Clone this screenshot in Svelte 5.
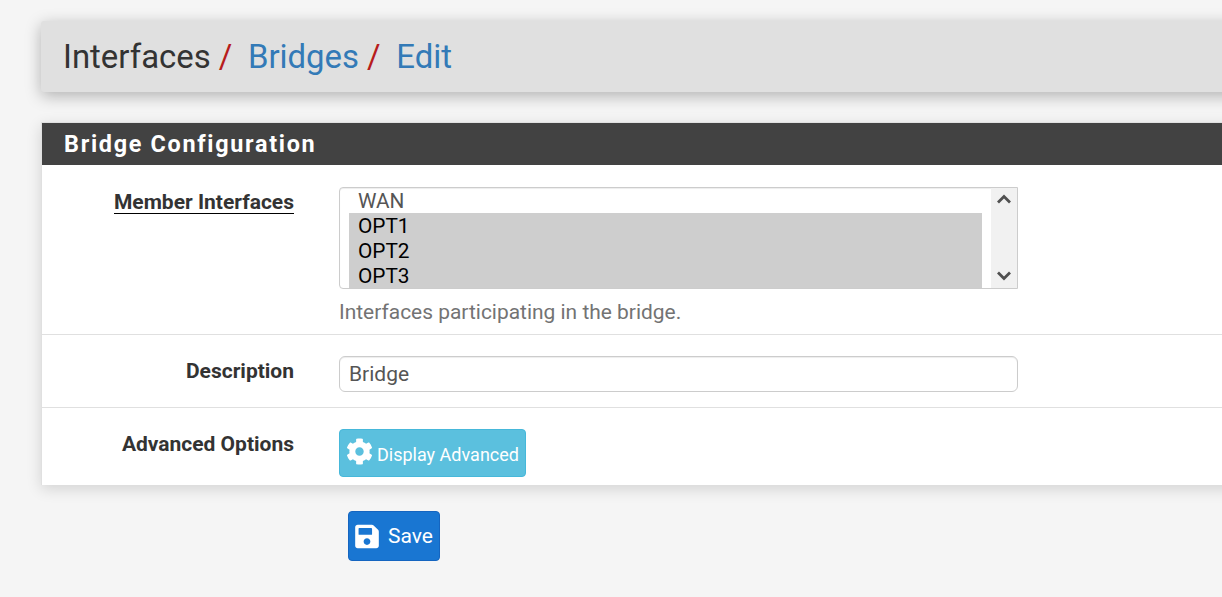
<script>
  const options = [
    { label: 'WAN', selected: false },
    { label: 'OPT1', selected: true },
    { label: 'OPT2', selected: true },
    { label: 'OPT3', selected: true }
  ];
</script>

<div class="page">
  <header class="crumbs">
    <h1>
      <span>Interfaces</span><span class="sep">/</span><a href="#b">Bridges</a><span class="sep">/</span><a href="#e">Edit</a>
    </h1>
  </header>

  <section class="panel">
    <h2>Bridge Configuration</h2>
    <div class="body">
      <div class="row first">
        <div class="label"><span class="under">Member Interfaces</span></div>
        <div class="field">
          <div class="listbox" role="listbox" aria-multiselectable="true">
            <div class="opts">
              {#each options as o}
                <div class="opt" class:sel={o.selected} role="option" aria-selected={o.selected}>{o.label}</div>
              {/each}
            </div>
            <div class="sb">
              <svg width="16" height="12" viewBox="0 0 16 12"><path d="M2 9.5 L8 3.5 L14 9.5" fill="none" stroke="#505050" stroke-width="2.8"/></svg>
              <svg width="16" height="12" viewBox="0 0 16 12"><path d="M2 2.5 L8 8.5 L14 2.5" fill="none" stroke="#505050" stroke-width="2.8"/></svg>
            </div>
          </div>
          <p class="help">Interfaces participating in the bridge.</p>
        </div>
      </div>
      <div class="row second">
        <div class="label">Description</div>
        <div class="field"><input type="text" value="Bridge" /></div>
      </div>
      <div class="row third">
        <div class="label">Advanced Options</div>
        <div class="field">
          <button class="info">
            <svg class="cog" viewBox="0 0 512 512"><path fill="currentColor" d="M487.4 315.7l-42.6-24.6c4.3-23.2 4.3-47 0-70.2l42.6-24.6c4.9-2.8 7.1-8.6 5.5-14-11.1-35.6-30-67.8-54.7-94.6-3.8-4.1-10-5.1-14.8-2.3L380.8 110c-17.9-15.4-38.5-27.3-60.8-35.1V25.8c0-5.6-3.9-10.5-9.4-11.7-36.7-8.2-74.3-7.8-109.2 0-5.5 1.2-9.4 6.1-9.4 11.7V75c-22.2 7.9-42.8 19.8-60.8 35.1L88.7 85.5c-4.9-2.8-11-1.9-14.8 2.3-24.7 26.7-43.6 58.9-54.7 94.6-1.7 5.4.6 11.2 5.5 14L67.3 221c-4.3 23.2-4.3 47 0 70.2l-42.6 24.6c-4.9 2.8-7.1 8.6-5.5 14 11.1 35.6 30 67.8 54.7 94.6 3.8 4.1 10 5.1 14.8 2.3l42.6-24.6c17.9 15.4 38.5 27.3 60.8 35.1v49.2c0 5.6 3.9 10.5 9.4 11.7 36.7 8.2 74.3 7.8 109.2 0 5.5-1.2 9.4-6.1 9.4-11.7v-49.2c22.2-7.9 42.8-19.8 60.8-35.1l42.6 24.6c4.9 2.8 11 1.9 14.8-2.3 24.7-26.7 43.6-58.9 54.7-94.6 1.5-5.5-.7-11.3-5.6-14.1zM256 336c-44.1 0-80-35.9-80-80s35.9-80 80-80 80 35.9 80 80-35.9 80-80 80z"/></svg>
            <span>Display Advanced</span>
          </button>
        </div>
      </div>
    </div>
  </section>

  <div class="actions">
    <button class="save">
      <svg class="disk" viewBox="0 0 448 512"><path fill="currentColor" d="M433.941 129.941l-83.882-83.882A48 48 0 0 0 316.118 32H48C21.49 32 0 53.49 0 80v352c0 26.51 21.49 48 48 48h352c26.51 0 48-21.49 48-48V163.882a48 48 0 0 0-14.059-33.941zM224 416c-35.346 0-64-28.654-64-64 0-35.346 28.654-64 64-64s64 28.654 64 64c0 35.346-28.654 64-64 64zm96-304.52V212c0 6.627-5.373 12-12 12H76c-6.627 0-12-5.373-12-12V108c0-6.627 5.373-12 12-12h228.52c3.183 0 6.235 1.264 8.485 3.515l3.48 3.48A11.996 11.996 0 0 1 320 111.48z"/></svg>
      <span>Save</span>
    </button>
  </div>
</div>

<style>
  :global(body) {
    margin: 0;
    background: #f5f5f5;
    overflow: hidden;
  }
  .page {
    height: 597px;
    box-sizing: border-box;
    padding: 21px 0 0 41px;
    font-family: Roboto, sans-serif;
    color: #333;
    overflow: hidden;
  }
  .crumbs {
    height: 71px;
    box-sizing: border-box;
    margin-right: -20px;
    background: #e0e0e0;
    border-radius: 3px 0 0 3px;
    box-shadow: 0 4px 16px rgba(0, 0, 0, 0.28);
    display: flex;
    align-items: center;
    padding: 1px 0 0 22px;
  }
  h1 {
    margin: 0;
    font-size: 32.9px;
    font-weight: 400;
    line-height: 38px;
    color: #333;
  }
  h1 a {
    color: #337ab7;
    text-decoration: none;
  }
  .sep {
    color: #b71c1c;
    margin: 0 15.7px 0 8px;
  }
  .panel {
    margin: 30px -20px 0 0;
    background: #fff;
    border-left: 1px solid #e0e0e0;
    border-top: 1px solid #e0e0e0;
    box-shadow: 0 4px 14px rgba(0, 0, 0, 0.14);
  }
  h2 {
    margin: 0;
    height: 42px;
    background: #424242;
    color: #fff;
    font-size: 23.4px;
    font-weight: 700;
    letter-spacing: 1.7px;
    line-height: 42px;
    padding-left: 22px;
  }
  .row {
    display: flex;
    box-sizing: border-box;
    border-bottom: 1px solid #e0e0e0;
  }
  .row:last-child { border-bottom: 0; }
  .first { height: 170px; padding-top: 22px; }
  .second { height: 73px; padding-top: 21px; }
  .third { height: 77px; padding-top: 21px; }
  .label {
    width: 252px;
    text-align: right;
    font-size: 21px;
    font-weight: 700;
    line-height: 30px;
    flex: none;
  }
  .under {
    display: inline-block;
    border-bottom: 1px solid #000;
    line-height: 22px;
    margin-top: 4px;
  }
  .field {
    margin-left: 45px;
    width: 679px;
    flex: none;
  }
  .listbox {
    box-sizing: border-box;
    height: 102px;
    border: 1px solid #ccc;
    border-radius: 4px 0 0 4px;
    display: flex;
    background: #fff;
    overflow: hidden;
    box-shadow: inset 0 1px 1px rgba(0, 0, 0, 0.075);
  }
  .opts {
    flex: 1;
    padding: 0 9px;
  }
  .opt {
    height: 25px;
    font-size: 20.8px;
    line-height: 27px;
    padding-left: 9px;
    color: #555;
  }
  .opt.sel {
    background: #cecece;
    color: #000;
  }
  .sb {
    width: 26px;
    background: #f1f1f1;
    display: flex;
    flex-direction: column;
    justify-content: space-between;
    align-items: center;
    padding: 5px 0 6px;
    box-sizing: border-box;
  }
  .sb svg { display: block; }
  .help {
    margin: 11px 0 0;
    font-size: 20.95px;
    line-height: 25px;
    color: #737373;
  }
  input {
    display: block;
    box-sizing: border-box;
    width: 100%;
    height: 36px;
    border: 1px solid #ccc;
    border-radius: 6px;
    padding: 0 9px;
    font: 21px Roboto, sans-serif;
    color: #555;
    background: #fff;
    outline: none;
    box-shadow: inset 0 1px 1px rgba(0, 0, 0, 0.075);
  }
  button {
    display: flex;
    align-items: center;
    font-family: Roboto, sans-serif;
    color: #fff;
    border-radius: 4px;
    box-sizing: border-box;
    cursor: pointer;
  }
  .info {
    width: 187px;
    height: 48px;
    background: #5bc0de;
    border: 1px solid #46b8da;
    font-size: 18px;
    padding: 0 0 0 6px;
    gap: 4px;
  }
  .cog { width: 27px; height: 27px; margin-top: -3px; }
  .info span { margin-top: 2px; }
  .actions { padding: 26px 0 0 307px; }
  .save {
    width: 92px;
    height: 50px;
    background: #1976d2;
    border: 1px solid #1565c0;
    font-size: 21px;
    padding: 0 0 0 6px;
    gap: 9px;
  }
  .disk { width: 24px; height: 27px; }
</style>
